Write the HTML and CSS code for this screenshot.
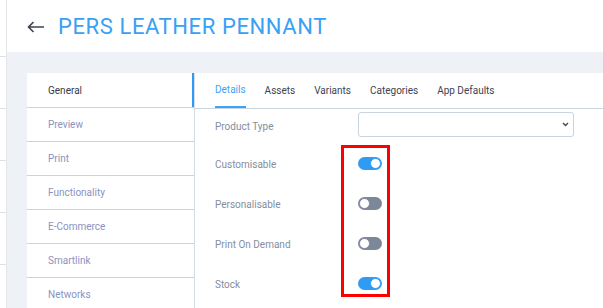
FILE: index.html
```html
<!DOCTYPE html>
<html lang="en">
<head>
    <meta charset="UTF-8">
    <meta name="viewport" content="width=device-width, initial-scale=1.0">
    <title>Product</title>
    <link rel="stylesheet" href="styles.css">
</head>
<body>
<div class="app">
    <!-- partially hidden main menu -->
    <div class="rail">
        <div class="rail-item"></div>
        <div class="rail-item"></div>
        <div class="rail-item"></div>
        <div class="rail-item"></div>
        <div class="rail-item"></div>
    </div>

    <div class="main">
        <div class="header">
            <span class="back">
                <svg width="18" height="12" viewBox="0 0 18 12">
                    <path d="M17 6H1.5M6.5 1L1.5 6l5 5" fill="none" stroke="#3d4450" stroke-width="1.6"/>
                </svg>
            </span>
            <h1 class="title">PERS LEATHER PENNANT</h1>
        </div>

        <div class="content">
            <div class="panel">
                <ul class="sidenav">
                    <li class="active">General</li>
                    <li>Preview</li>
                    <li>Print</li>
                    <li>Functionality</li>
                    <li>E-Commerce</li>
                    <li>Smartlink</li>
                    <li>Networks</li>
                </ul>

                <div class="pane">
                    <div class="tabs">
                        <span class="tab active">Details</span>
                        <span class="tab">Assets</span>
                        <span class="tab">Variants</span>
                        <span class="tab">Categories</span>
                        <span class="tab">App Defaults</span>
                    </div>

                    <div class="form">
                        <div class="row first">
                            <label>Product Type</label>
                            <div class="select">
                                <svg width="7" height="5" viewBox="0 0 7 5">
                                    <path d="M1 1l2.5 2.5L6 1" fill="none" stroke="#444" stroke-width="1.3"/>
                                </svg>
                            </div>
                        </div>
                        <div class="row">
                            <label>Customisable</label>
                            <span class="toggle on"></span>
                        </div>
                        <div class="row">
                            <label>Personalisable</label>
                            <span class="toggle"></span>
                        </div>
                        <div class="row">
                            <label>Print On Demand</label>
                            <span class="toggle"></span>
                        </div>
                        <div class="row">
                            <label>Stock</label>
                            <span class="toggle on"></span>
                        </div>

                        <!-- highlight box -->
                        <div class="highlight"></div>
                    </div>
                </div>
            </div>
        </div>
    </div>
</div>
</body>
</html>
```

FILE: styles.css
```css
body {
    margin: 0;
    font-family: Roboto, "Liberation Sans", sans-serif;
    background-color: #fff;
    overflow: hidden;
}

.app {
    display: flex;
    height: 308px;
}

/* Left rail */
.rail {
    width: 6px;
    border-right: 1px solid #e3e7ec;
    padding-top: 5px;
    background-color: #fff;
}

.rail-item {
    height: 51px;
    border-bottom: 1px solid #dde2e8;
}

.main {
    flex: 1;
    display: flex;
    flex-direction: column;
    min-height: 0;
}

/* Header */
.header {
    flex-shrink: 0;
    height: 52px;
    display: flex;
    align-items: center;
    padding-left: 20px;
    background-color: #fff;
}

.back {
    display: flex;
    width: 18px;
    margin-right: 13px;
    margin-top: 1px;
}

.title {
    margin: 0;
    font-size: 22px;
    font-weight: 400;
    color: #3aa0f4;
    letter-spacing: 0.6px;
}

/* Content */
.content {
    flex: 1;
    min-height: 0;
    overflow: hidden;
    background-color: #eef1f5;
    padding: 21px 0 0 20px;
}

.panel {
    display: flex;
    background-color: #fff;
    height: 100%;
}

.sidenav {
    list-style: none;
    margin: 0;
    padding: 0;
    width: 167px;
}

.sidenav li {
    height: 33px;
    line-height: 34px;
    padding-left: 21px;
    font-size: 10px;
    color: #8c92c0;
    border-bottom: 1px solid #c9d4e1;
}

.sidenav li.active {
    color: #343a46;
    box-shadow: inset -2px 0 0 #2f9bf5;
    height: 34px;
    line-height: 35px;
}

.pane {
    flex: 1;
    border-left: 1px solid #d3dce7;
}

/* Tabs */
.tabs {
    display: flex;
    height: 35px;
    padding-left: 20px;
    border-bottom: 1px solid #c9d4e1;
}

.tab {
    font-size: 10px;
    color: #3c4452;
    line-height: 35px;
    margin-right: 19px;
}

.tab.active {
    color: #3ea2f5;
    border-bottom: 2px solid #3ea2f5;
    line-height: 34px;
    height: 33px;
}

/* Form */
.form {
    position: relative;
    padding: 3px 0 0 20px;
}

.row {
    display: flex;
    align-items: center;
    height: 40px;
}

.row.first {
    height: 25px;
    margin-bottom: 6px;
}

.row label {
    width: 143px;
    padding-top: 3px;
    font-size: 10px;
    color: #858e9e;
}

.select {
    box-sizing: border-box;
    width: 216px;
    height: 25px;
    border: 1px solid #c9d4e1;
    border-radius: 3px;
    display: flex;
    align-items: center;
    justify-content: flex-end;
    padding-right: 4px;
}

.toggle {
    position: relative;
    width: 24px;
    height: 13px;
    border-radius: 7px;
    background-color: #7c8799;
}

.toggle::after {
    content: "";
    position: absolute;
    top: 1px;
    left: 1px;
    width: 9px;
    height: 9px;
    border-radius: 50%;
    background-color: #fff;
    border: 1px solid #7c8799;
    box-sizing: content-box;
}

.toggle.on {
    background-color: #2f9bf5;
}

.toggle.on::after {
    left: 12px;
    border-color: #2f9bf5;
}

.highlight {
    position: absolute;
    left: 146px;
    top: 36px;
    width: 43px;
    height: 146px;
    border: 3px solid #ff0000;
}
```
